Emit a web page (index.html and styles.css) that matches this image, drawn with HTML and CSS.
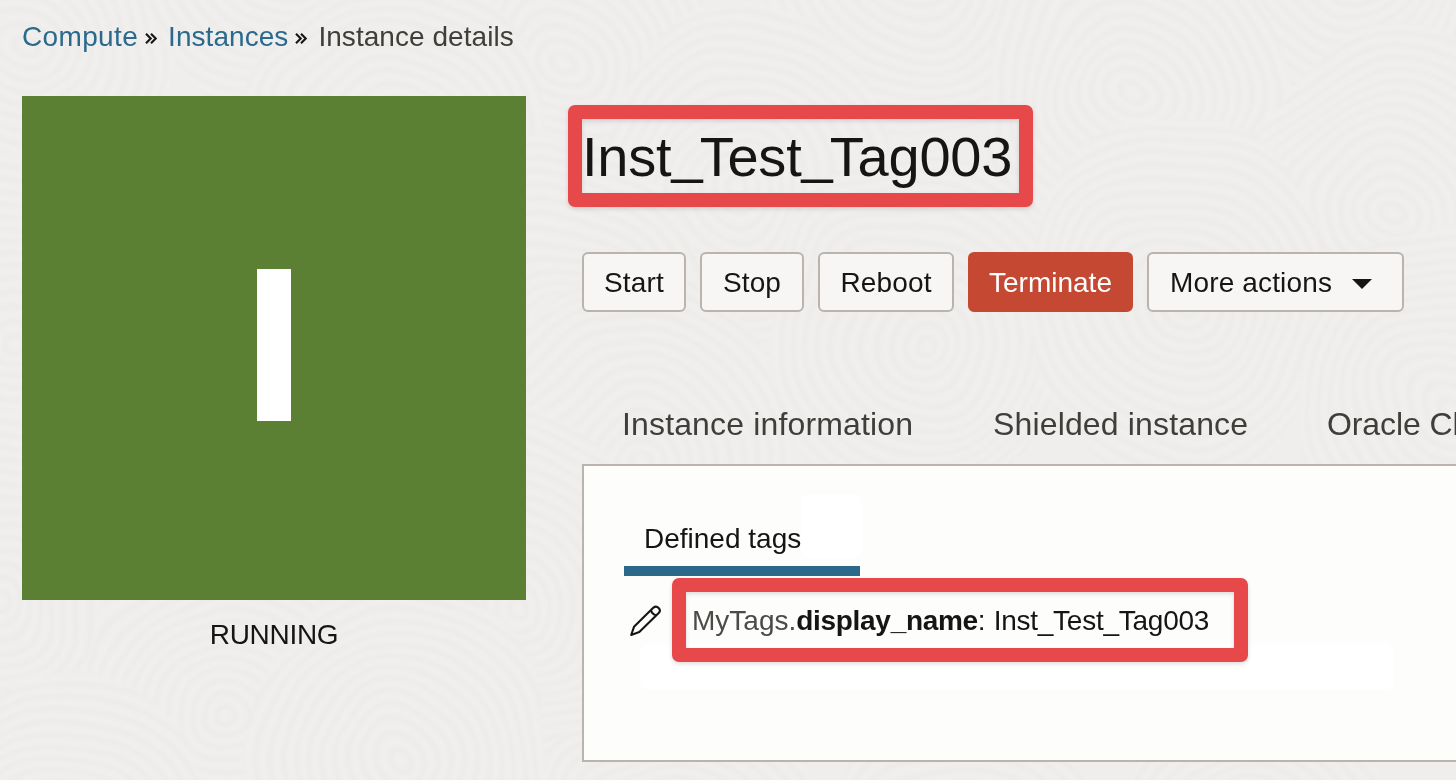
FILE: index.html
```html
<!DOCTYPE html>
<html lang="en">
<head>
<meta charset="utf-8">
<title>Instance details</title>
<link rel="stylesheet" href="styles.css">
</head>
<body>
<svg class="texture" viewBox="0 0 1456 780" aria-hidden="true">
  <defs>
    <filter id="wobble" x="0" y="0" width="100%" height="100%">
      <feTurbulence type="fractalNoise" baseFrequency="0.007" numOctaves="2" seed="4"/>
      <feDisplacementMap in="SourceGraphic" scale="40"/>
      <feGaussianBlur stdDeviation="1.6"/>
    </filter>
    <radialGradient id="rings" gradientUnits="userSpaceOnUse" cx="0" cy="0" r="13" spreadMethod="repeat">
      <stop offset="0" stop-color="#f0efed"/>
      <stop offset=".4" stop-color="#f0efed"/>
      <stop offset=".75" stop-color="#ebeae8"/>
      <stop offset="1" stop-color="#f0efed"/>
    </radialGradient>
    <ellipse id="disc" rx="150" ry="190" fill="url(#rings)"/>
  </defs>
  <g filter="url(#wobble)">
    <rect width="1456" height="780" fill="#efeeec"/>
    <use href="#disc" x="20" y="40"/><use href="#disc" x="290" y="-60"/><use href="#disc" x="560" y="60"/><use href="#disc" x="910" y="-50"/><use href="#disc" x="1350" y="-50"/>
    <use href="#disc" x="1130" y="90"/><use href="#disc" x="400" y="150"/><use href="#disc" x="740" y="190"/><use href="#disc" x="1390" y="210"/>
    <use href="#disc" x="10" y="340"/><use href="#disc" x="560" y="330"/><use href="#disc" x="920" y="340"/><use href="#disc" x="1180" y="300"/><use href="#disc" x="1450" y="410"/>
    <use href="#disc" x="640" y="460"/><use href="#disc" x="0" y="600"/><use href="#disc" x="510" y="600"/>
    <use href="#disc" x="230" y="720"/><use href="#disc" x="70" y="860"/><use href="#disc" x="400" y="760"/><use href="#disc" x="680" y="870"/><use href="#disc" x="960" y="890"/><use href="#disc" x="1250" y="870"/>
  </g>
</svg>
<div class="page">
  <nav class="breadcrumb">
    <a class="crumb-link" href="#">Compute</a>
    <svg class="chevrons" viewBox="0 0 12 11"><path d="M1 .8l4.700 4.700L1 10.200M6 .8l4.700 4.700L6 10.200"/></svg>
    <a class="crumb-link crumb-instances" href="#">Instances</a>
    <svg class="chevrons" viewBox="0 0 12 11"><path d="M1 .8l4.700 4.700L1 10.200M6 .8l4.700 4.700L6 10.200"/></svg>
    <span class="crumb-current">Instance details</span>
  </nav>
  <div class="layout">
    <aside class="status">
      <div class="status-tile"><span class="status-letter"></span></div>
      <div class="status-label">RUNNING</div>
    </aside>
    <main class="content">
      <h1 class="title">Inst<span class="us">_</span>Test<span class="us">_</span>Tag003<span class="mark mark-title"></span></h1>
      <div class="actions">
        <button class="btn btn-start">Start</button>
        <button class="btn btn-stop">Stop</button>
        <button class="btn btn-reboot">Reboot</button>
        <button class="btn btn-danger">Terminate</button>
        <button class="btn btn-more">More actions<svg class="caret" viewBox="0 0 20 10"><path d="M0 0h20L10 10z"/></svg></button>
      </div>
      <div class="tabs">
        <span class="tab tab-info">Instance information</span>
        <span class="tab tab-shielded">Shielded instance</span>
        <span class="tab tab-agent">Oracle Cloud Agent</span>
      </div>
      <section class="panel">
        <span class="blank blank-tab"></span>
        <span class="blank blank-row"></span>
        <div class="subtab">Defined tags</div>
        <div class="tag-row">
          <svg class="pencil" viewBox="0 0 32 32"><path d="M1.200 30L4 21.800 23.500 2.600C27-.4 32 4.600 28.700 8L9.300 27zM21 5.200q1 4 5.300 5.200"/></svg>
          <div class="tag"><span class="tag-ns">MyTags.</span><b class="tag-key">display_name</b><span>:</span><span class="tag-value">Inst_Test_Tag003</span><span class="mark mark-tag"></span></div>
        </div>
      </section>
    </main>
  </div>
</div>
</body>
</html>
```

FILE: styles.css
```css
* { box-sizing: border-box; }
body {
  margin: 0;
  width: 1456px;
  height: 780px;
  overflow: hidden;
  position: relative;
  background: #efeeec;
  color: #161513;
  font-family: "Liberation Sans", Arial, sans-serif;
  font-size: 28px;
}
.texture { position: absolute; inset: 0; width: 1456px; height: 780px; }
.page { position: relative; width: 1456px; height: 780px; overflow: hidden; padding: 20px 0 0 22px; }
.breadcrumb { display: flex; align-items: center; height: 34px; white-space: nowrap; }
.crumb-link { color: #2b6a8d; text-decoration: none; letter-spacing: .35px; }
.crumb-instances { letter-spacing: .05px; }
.crumb-current { color: #3f3e3b; letter-spacing: .05px; }
.chevrons {
  width: 12px;
  height: 11px;
  margin: 3px 11px 0 7px;
  fill: none;
  stroke: #161513;
  stroke-width: 2.1;
}
.layout { display: flex; gap: 56px; margin-top: 42px; }
.status { width: 504px; flex: none; }
.status-tile {
  height: 504px;
  background: #5b8034;
  display: flex;
  justify-content: center;
  align-items: flex-start;
  padding-top: 173px;
}
.status-letter { width: 34px; height: 152px; background: #fff; }
.status-label { text-align: center; line-height: 32px; margin-top: 19px; letter-spacing: -.3px; }
.content { flex: none; width: 900px; }
.title {
  position: relative;
  width: 437px;
  margin: 28px 0 0;
  height: 66px;
  line-height: 66px;
  font-size: 56px;
  font-weight: 400;
  letter-spacing: -.2px;
  white-space: nowrap;
}
.us { letter-spacing: -3px; line-height: 1; vertical-align: 4px; }
.mark {
  position: absolute;
  border: 14px solid #e74849;
  border-radius: 7px;
  filter: drop-shadow(0 2px 2px rgba(0, 0, 0, .13));
}
.mark-title { left: -14px; top: -19px; width: 465px; height: 102px; }
.actions { display: flex; gap: 14px; margin-top: 62px; }
.btn {
  height: 60px;
  padding: 2px 0 0;
  border: 2px solid #bbb4ae;
  border-radius: 6px;
  background: #f7f6f4;
  color: #161513;
  font: inherit;
  letter-spacing: .15px;
  white-space: nowrap;
}
.btn-start, .btn-stop { width: 104px; }
.btn-reboot { width: 136px; }
.btn-danger { width: 165px; background: #c54832; border-color: #c54832; color: #fff; letter-spacing: 0; }
.btn-more { width: 257px; display: flex; align-items: center; padding-left: 21px; }
.caret { width: 20px; height: 10px; margin: 1px 0 0 20px; fill: #161513; }
.tabs { display: flex; gap: 80px; padding-left: 40px; margin-top: 90px; height: 62px; line-height: 44px; font-size: 32px; color: #3f3e3b; white-space: nowrap; }
.tab-info { width: 291px; letter-spacing: .15px; }
.tab-shielded { width: 255px; letter-spacing: .15px; }
.tab-agent { width: 280px; margin-left: -1px; letter-spacing: -.1px; }
.panel {
  position: relative;
  height: 298px;
  padding: 40px 0 0 40px;
  border: 2px solid #bbb4ae;
  background: #fdfdfb;
}
.blank { position: absolute; background: #fff; border-radius: 9px; }
.blank-tab { left: 217px; top: 28px; width: 61px; height: 64px; }
.blank-row { left: 56px; top: 178px; width: 754px; height: 46px; }
.subtab {
  position: relative;
  width: 236px;
  height: 70px;
  padding: 17px 0 0 20px;
  line-height: 32px;
  border-bottom: 10px solid #2b698b;
  white-space: nowrap;
}
.tag-row { position: relative; display: flex; align-items: center; height: 60px; margin-top: 15px; padding-left: 6px; gap: 30px; }
.pencil { width: 32px; height: 32px; margin-top: -1px; fill: none; stroke: #161513; stroke-width: 2.1; stroke-linejoin: round; }
.tag { position: relative; height: 32px; line-height: 32px; display: flex; white-space: nowrap; }
.tag-ns { color: #4c4b48; }
.tag-key { letter-spacing: -.3px; }
.tag-value { margin-left: 8px; letter-spacing: -.25px; }
.mark-tag { left: -20px; top: -27px; width: 576px; height: 84px; }
```
